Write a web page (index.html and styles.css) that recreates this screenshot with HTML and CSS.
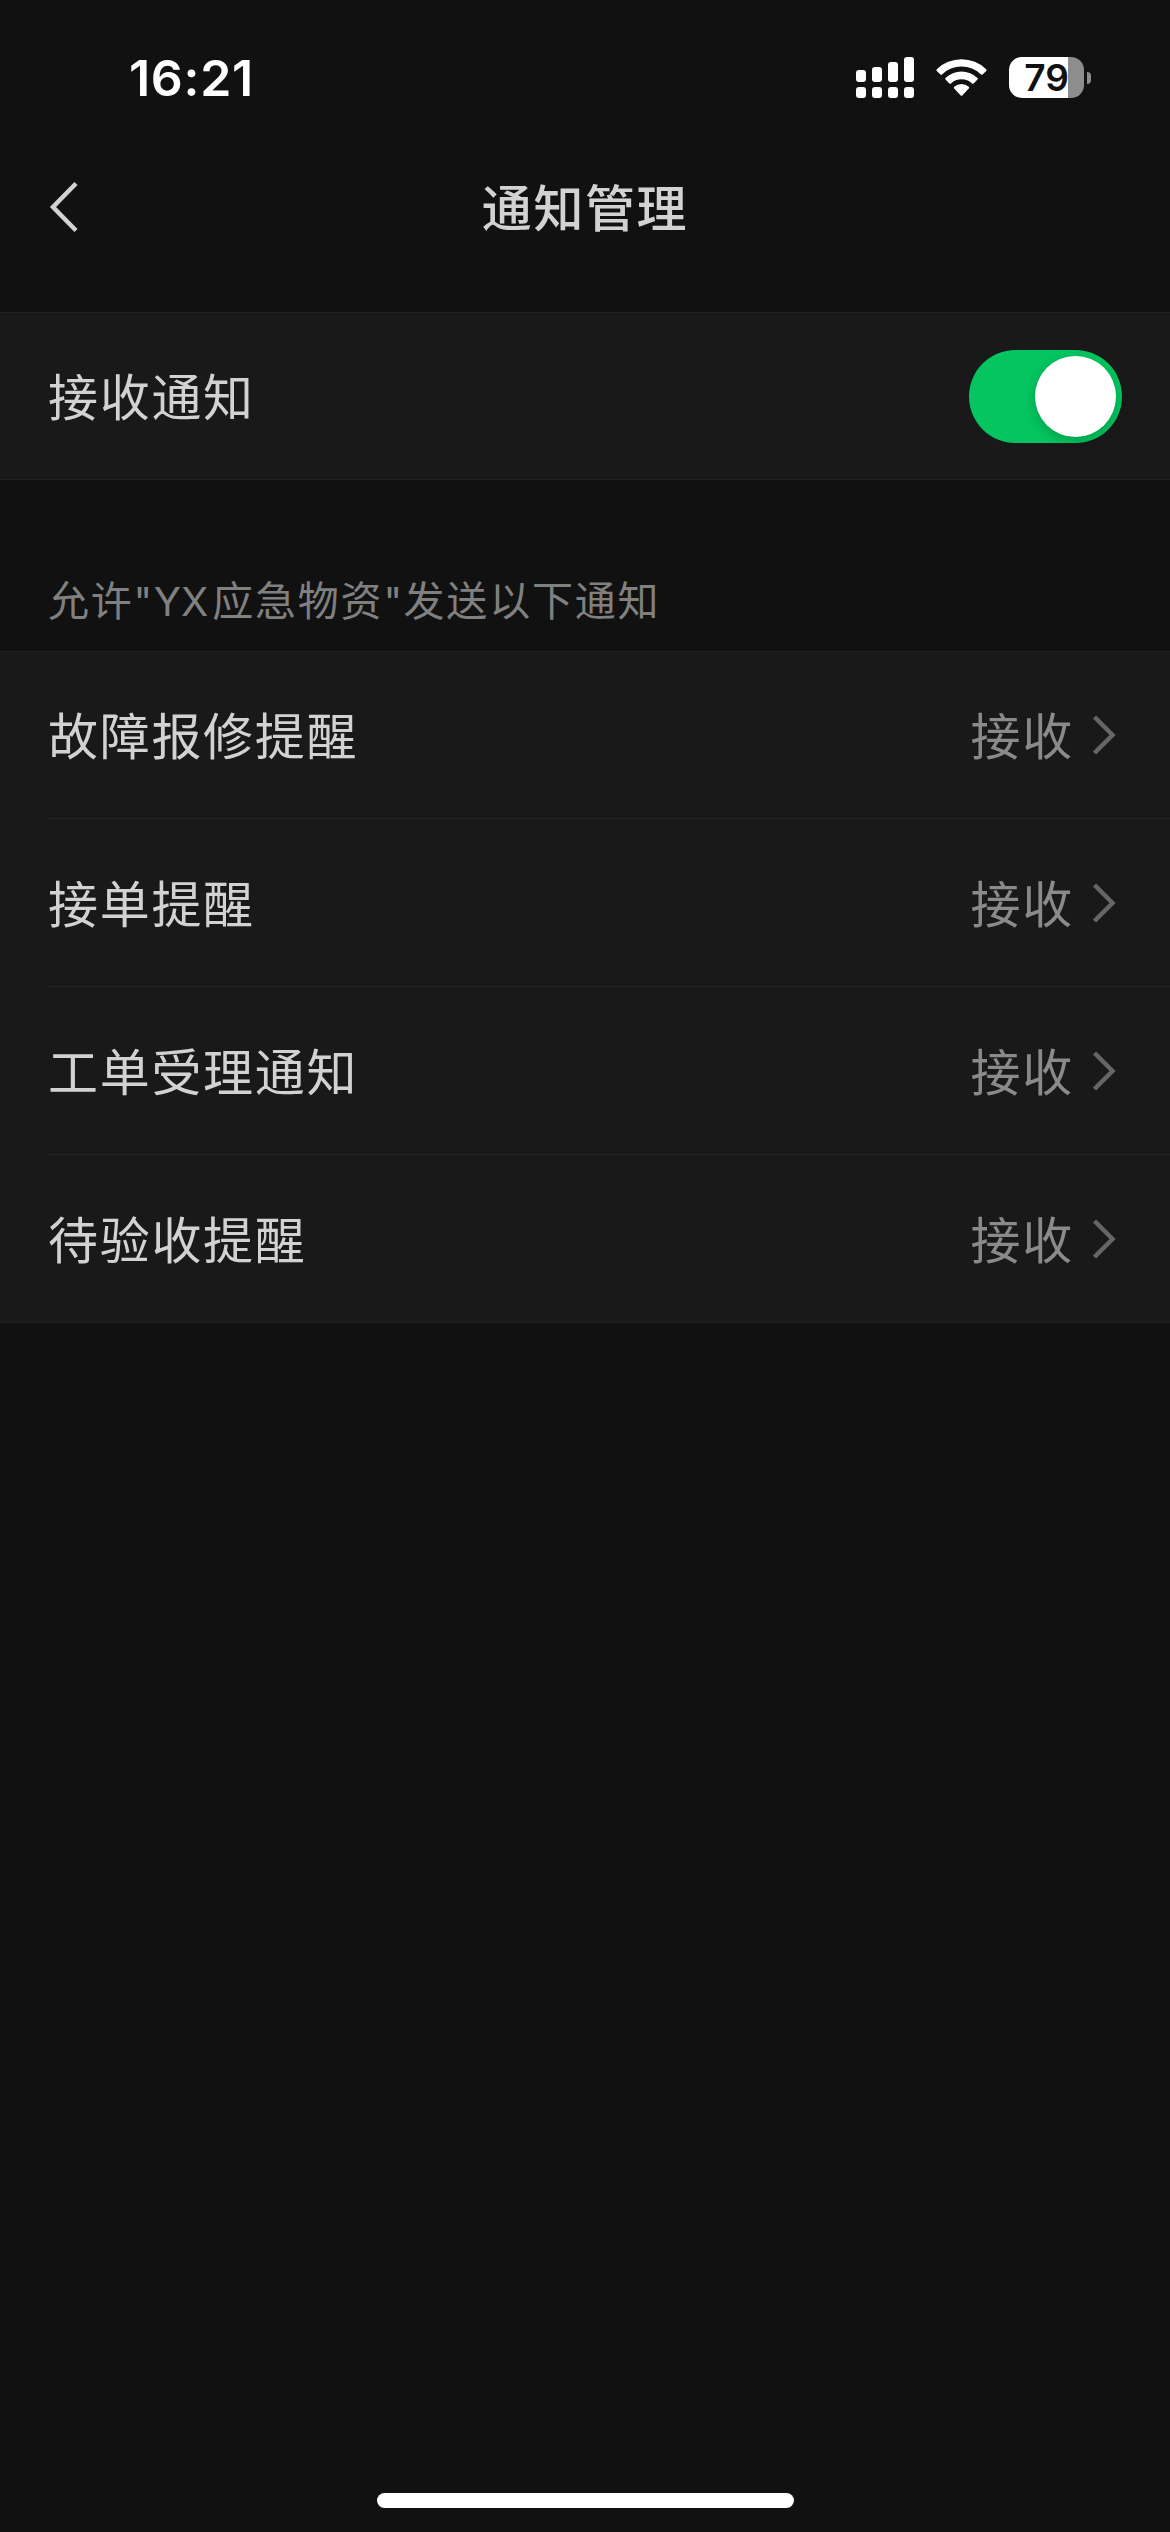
FILE: index.html
```html
<!DOCTYPE html>
<html lang="zh-CN">

<head>
    <meta charset="UTF-8">
    <meta name="viewport" content="width=device-width, initial-scale=1.0">
    <title>通知管理</title>
    <link rel="stylesheet" href="styles.css">
</head>

<body>

    <div class="status-bar">
        <span class="time">16:21</span>
        <div class="status-icons">
            <svg class="signal" width="58" height="41" viewBox="0 0 58 41" fill="#fff">
                <rect x="0" y="13" width="10" height="12" rx="3" />
                <rect x="16" y="10" width="10" height="15" rx="3" />
                <rect x="32" y="5" width="10" height="20" rx="3" />
                <rect x="48" y="0" width="10" height="25" rx="3" />
                <rect x="0" y="30" width="10" height="11" rx="3" />
                <rect x="16" y="30" width="10" height="11" rx="3" />
                <rect x="32" y="30" width="10" height="11" rx="3" />
                <rect x="48" y="30" width="10" height="11" rx="3" />
            </svg>
            <svg class="wifi" width="51" height="38" viewBox="0 0 51 38" fill="#fff">
                <path d="M0.8 10.2 A35.5 35.5 0 0 1 50.2 10.2 Q51 11 50.2 11.9 L46.6 15.4 Q45.8 16.1 45 15.4 A28 28 0 0 0 6 15.4 Q5.2 16.1 4.4 15.4 L0.8 11.9 Q0 11 0.8 10.2Z" />
                <path d="M9.5 19 A23 23 0 0 1 41.5 19 Q42.2 19.8 41.5 20.6 L37.6 24.4 Q36.8 25.1 36 24.4 A15.2 15.2 0 0 0 15 24.4 Q14.2 25.1 13.4 24.4 L9.5 20.6 Q8.8 19.8 9.5 19Z" />
                <path d="M18.2 27.7 A11.4 11.4 0 0 1 32.8 27.7 Q33.6 28.5 32.8 29.4 L26.3 36.4 Q25.5 37.2 24.7 36.4 L18.2 29.4 Q17.4 28.5 18.2 27.7Z" />
            </svg>
            <div class="battery">
                <div class="battery-body"><span>79</span></div>
                <div class="battery-cap"></div>
            </div>
        </div>
    </div>

    <header class="navbar">
        <svg class="back" width="30" height="52" viewBox="0 0 30 52">
            <path d="M27 2.5 L4 26 L27 49.5" />
        </svg>
        <h1>通知管理</h1>
    </header>

    <section class="group">
        <div class="row">
            <span class="label">接收通知</span>
            <div class="switch">
                <div class="knob"></div>
            </div>
        </div>
    </section>

    <p class="caption">允许<span class="latin">"</span><span class="latin name">YX</span>应急物资<span class="latin">"</span>发送以下通知</p>

    <section class="group">
        <div class="row">
            <span class="label">故障报修提醒</span>
            <span class="value">接收</span>
            <svg class="arrow" width="24" height="42" viewBox="0 0 24 42">
                <path d="M2.5 3 L20.5 21 L2.5 39" />
            </svg>
        </div>
        <div class="row">
            <span class="label">接单提醒</span>
            <span class="value">接收</span>
            <svg class="arrow" width="24" height="42" viewBox="0 0 24 42">
                <path d="M2.5 3 L20.5 21 L2.5 39" />
            </svg>
        </div>
        <div class="row">
            <span class="label">工单受理通知</span>
            <span class="value">接收</span>
            <svg class="arrow" width="24" height="42" viewBox="0 0 24 42">
                <path d="M2.5 3 L20.5 21 L2.5 39" />
            </svg>
        </div>
        <div class="row">
            <span class="label">待验收提醒</span>
            <span class="value">接收</span>
            <svg class="arrow" width="24" height="42" viewBox="0 0 24 42">
                <path d="M2.5 3 L20.5 21 L2.5 39" />
            </svg>
        </div>
    </section>

    <div class="home-indicator"></div>

</body>

</html>
```

FILE: styles.css
```css
* {
    box-sizing: border-box;
}

body {
    display: flex;
    flex-direction: column;
    min-height: 2532px;
    margin: 0;
    background-color: #111111;
    color: #d2d2d2;
    font-family: "Noto Sans CJK SC", sans-serif;
}

/* Status bar */
.status-bar {
    display: flex;
    justify-content: space-between;
    height: 141px;
    padding: 57px 79px 0 129px;
    color: #fff;
    font-family: Inter, sans-serif;
    font-weight: 600;
}

.time {
    font-size: 50px;
    line-height: 43px;
    letter-spacing: 0.7px;
}

.status-icons {
    display: flex;
    align-items: flex-start;
}

.wifi {
    margin: 2px 22px 0 22px;
}

.battery {
    display: flex;
    align-items: center;
    gap: 3px;
}

.battery-body {
    width: 75px;
    height: 41px;
    border-radius: 13px;
    background: linear-gradient(to right, #fff 59px, #8d8d8d 59px);
    color: #111;
    font-size: 37px;
    font-weight: 600;
    line-height: 41px;
    text-align: center;
}

.battery-cap {
    width: 4px;
    height: 12px;
    border-radius: 0 5px 5px 0;
    background-color: #8d8d8d;
}

/* Title bar */
.navbar {
    display: flex;
    align-items: center;
    height: 132px;
    margin-bottom: 39px;
    padding: 0 49px;
}

.navbar h1 {
    flex: 1;
    margin: 0 30px 0 0;
    padding-bottom: 5px;
    font-size: 50px;
    font-weight: 500;
    letter-spacing: 1.6px;
    text-align: center;
}

.back,
.arrow {
    fill: none;
    stroke: #d2d2d2;
    stroke-width: 4.5;
}

/* Settings list */
.group {
    border-top: 1px solid #222;
    border-bottom: 1px solid #222;
    background-color: #191919;
}

.row {
    display: flex;
    align-items: center;
    height: 168px;
    margin-left: 48px;
    padding-right: 48px;
    border-bottom: 1px solid #262626;
}

.row:first-child {
    height: 167px;
}

.row:last-child {
    height: 167px;
    border-bottom: none;
}

.row:only-child {
    height: 166px;
}

.label,
.value {
    padding-bottom: 4px;
    font-size: 50px;
    line-height: 72px;
    letter-spacing: 1.7px;
}

.label {
    flex: 1;
}

.value {
    margin-right: 18px;
    color: #8a8a8a;
}

.arrow {
    margin-right: 6px;
    stroke: #666;
}

.switch {
    width: 153px;
    height: 93px;
    padding: 6px;
    border-radius: 47px;
    background-color: #04c55f;
}

.knob {
    width: 81px;
    height: 81px;
    margin-left: auto;
    border-radius: 50%;
    background-color: #fff;
    box-shadow: 0 4px 12px rgba(0, 0, 0, 0.2);
}

.caption {
    height: 171px;
    margin: 0;
    padding: 88px 48px 0;
    color: #808080;
    font-size: 41px;
    line-height: 60px;
    letter-spacing: 1.8px;
}

.latin {
    font-family: Inter, sans-serif;
    font-size: 40px;
    font-weight: 400;
    letter-spacing: 1.5px;
}

.name {
    margin-right: 4px;
    letter-spacing: 0;
}

.home-indicator {
    width: 417px;
    height: 15px;
    margin: auto auto 24px;
    border-radius: 8px;
    background-color: #fff;
}
```
